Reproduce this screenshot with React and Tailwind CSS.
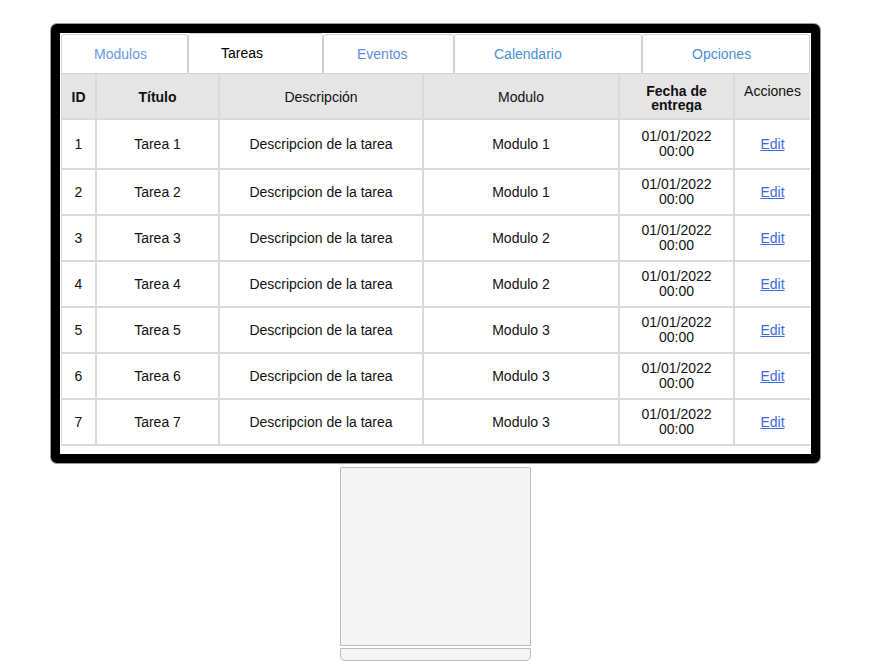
import React from 'react';

const tabs = [
  { label: 'Modulos', w: 'w-[127px] pl-[32px]', active: false, color: 'text-[#6a98e0]' },
  { label: 'Tareas', w: 'w-[135px] pl-[32px]', active: true, color: 'text-black' },
  { label: 'Eventos', w: 'w-[131px] pl-[33px]', active: false, color: 'text-[#5a8ddc]' },
  { label: 'Calendario', w: 'w-[188px] pl-[39px]', active: false, color: 'text-[#4a8fd8]' },
  { label: 'Opciones', w: 'w-[168px] pl-[49px]', active: false, color: 'text-[#4a8fd8]' },
];

const rows = [
  { id: 1, modulo: 'Modulo 1' },
  { id: 2, modulo: 'Modulo 1' },
  { id: 3, modulo: 'Modulo 2' },
  { id: 4, modulo: 'Modulo 2' },
  { id: 5, modulo: 'Modulo 3' },
  { id: 6, modulo: 'Modulo 3' },
  { id: 7, modulo: 'Modulo 3' },
];

const cols = 'grid grid-cols-[35px_123px_204px_196px_115px_75px]';
const cell = 'flex items-center justify-center text-center border-r-2 border-[#d9d9d9]';

export default function App() {
  return (
    <div className="min-h-screen bg-white pt-[24px] pl-[51px] text-[14px] text-[#111]" style={{ fontFamily: '"Liberation Sans", Arial, sans-serif' }}>
      {/* monitor */}
      <div className="w-[769px] h-[439px] border-[9px] border-black rounded-[6px] bg-white p-[1px] shadow-[0_0_0_1px_#9a9a9a]">
        {/* tabs */}
        <div className="flex h-[40px]">
          {tabs.map((t) => (
            <div
              key={t.label}
              className={`${t.w} ${t.color} flex items-center border border-[#d0d0d0] rounded-t-[3px] ${t.active ? '-mt-[1px] h-[41px]' : 'h-[40px] pt-[1px]'}`}
            >
              {t.label}
            </div>
          ))}
        </div>

        {/* table */}
        <div className="w-[749px] border-l border-[#d9d9d9]">
          <div className={`${cols} h-[46px] bg-[#e5e5e5] border-b-2 border-[#d9d9d9]`}>
            <div className={`${cell} font-bold pt-[2px]`}>ID</div>
            <div className={`${cell} font-bold pt-[2px]`}>Título</div>
            <div className={`${cell} pt-[2px]`}>Descripción</div>
            <div className={`${cell} pt-[2px]`}>Modulo</div>
            <div className="flex justify-center border-r-2 border-[#d9d9d9]">
              <div className="mt-[10px] h-[28px] overflow-hidden leading-[14px] font-bold text-center">
                Fecha de<br />entrega
              </div>
            </div>
            <div className="flex justify-center pt-[9px] leading-[16px]">Acciones</div>
          </div>
          {rows.map((r, i) => (
            <div key={r.id} className={`${cols} ${i === 0 ? 'h-[50px]' : 'h-[46px]'} border-b-2 border-[#d9d9d9]`}>
              <div className={cell}>{r.id}</div>
              <div className={cell}>Tarea {r.id}</div>
              <div className={cell}>Descripcion de la tarea</div>
              <div className={cell}>{r.modulo}</div>
              <div className={`${cell} leading-[15px] pb-[1px]`}>
                01/01/2022<br />00:00
              </div>
              <div className="flex items-center justify-center">
                <a href="#" className="text-[#3a6be0] underline">Edit</a>
              </div>
            </div>
          ))}
        </div>
      </div>

      {/* stand */}
      <div className="w-[769px] flex flex-col items-center">
        <div className="mt-[4px] w-[191px] h-[179px] bg-[#f5f5f5] border border-[#bbb] rounded-t-[2px]" />
        <div className="mt-[2px] w-[191px] h-[13px] bg-[#f5f5f5] border border-[#bbb] rounded-b-[5px]" />
      </div>
    </div>
  );
}
